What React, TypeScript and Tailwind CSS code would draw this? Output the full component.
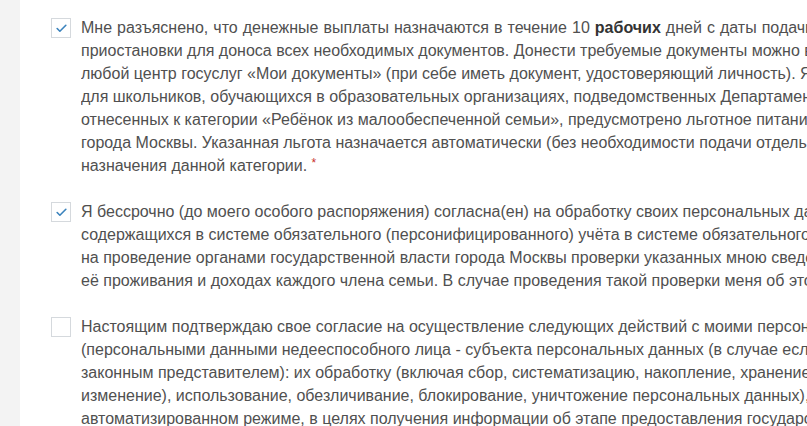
import { Check } from "lucide-react";

type Item = {
  checked: boolean;
  lines: React.ReactNode[];
};

const items: Item[] = [
  {
    checked: true,
    lines: [
      <span className="[word-spacing:0.6px]">
        Мне разъяснено, что денежные выплаты назначаются в течение 10{" "}
        <b className="font-bold text-[#333]">рабочих</b> дней с даты подачи заявления
      </span>,
      "приостановки для доноса всех необходимых документов. Донести требуемые документы можно в течение",
      "любой центр госуслуг «Мои документы» (при себе иметь документ, удостоверяющий личность). Я уведомлен(а)",
      "для школьников, обучающихся в образовательных организациях, подведомственных Департаменту образования",
      "отнесенных к категории «Ребёнок из малообеспеченной семьи», предусмотрено льготное питание за счет",
      "города Москвы. Указанная льгота назначается автоматически (без необходимости подачи отдельного",
      <>
        назначения данной категории. <span className="relative -top-1 text-xs text-[#c9302c]">*</span>
      </>,
    ],
  },
  {
    checked: true,
    lines: [
      "Я бессрочно (до моего особого распоряжения) согласна(ен) на обработку своих персональных данных",
      "содержащихся в системе обязательного (персонифицированного) учёта в системе обязательного пенсионного",
      "на проведение органами государственной власти города Москвы проверки указанных мною сведений о месте",
      "её проживания и доходах каждого члена семьи. В случае проведения такой проверки меня об этом уведомят",
    ],
  },
  {
    checked: false,
    lines: [
      "Настоящим подтверждаю свое согласие на осуществление следующих действий с моими персональными данными",
      "(персональными данными недееспособного лица - субъекта персональных данных (в случае если я являюсь его",
      "законным представителем): их обработку (включая сбор, систематизацию, накопление, хранение, уточнение",
      "изменение), использование, обезличивание, блокирование, уничтожение персональных данных), в том числе в",
      "автоматизированном режиме, в целях получения информации об этапе предоставления государственной услуги",
    ],
  },
];

function Box({ checked }: { checked: boolean }) {
  return (
    <div className="mt-[2px] flex h-5 w-5 shrink-0 items-center justify-center border border-[#d5d9dd] bg-white">
      {checked && <Check className="h-[13px] w-[13px] text-[#3b83bd]" strokeWidth={3} />}
    </div>
  );
}

export default function App() {
  return (
    <div
      className="flex h-[426px] w-[807px] overflow-hidden bg-white"
      style={{ fontFamily: '"Liberation Sans", Arial, sans-serif' }}
    >
      <div className="w-5 shrink-0 bg-[#f3f3f3]" />
      <div className="flex min-w-0 flex-1 flex-col gap-[23px] pl-[31px] pt-[16px]">
        {items.map((item, i) => (
          <div key={i} className="flex gap-[10px]">
            <Box checked={item.checked} />
            <div className="min-w-0 flex-1 overflow-hidden text-[16px] leading-[23px] text-[#505050]">
              {item.lines.map((l, j) => (
                <div key={j} className="whitespace-nowrap">
                  {l}
                </div>
              ))}
            </div>
          </div>
        ))}
      </div>
    </div>
  );
}
